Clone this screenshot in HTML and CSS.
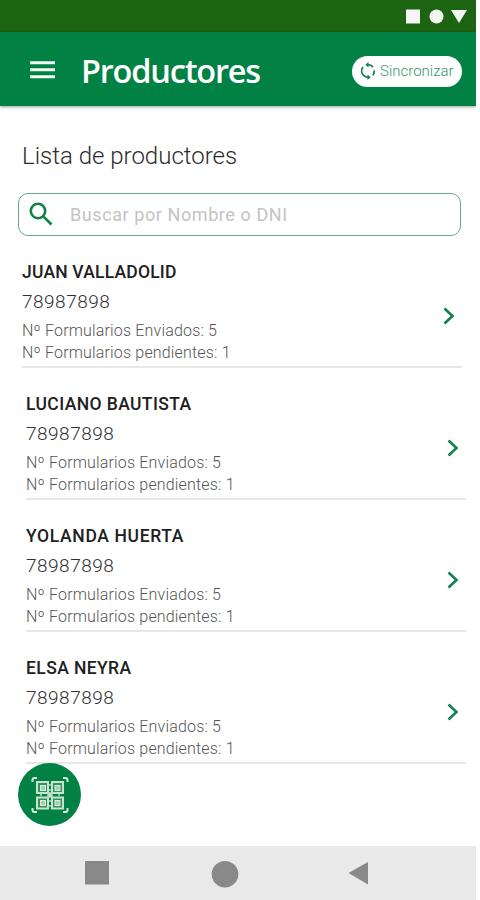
FILE: index.html
```
<!DOCTYPE html>
<html lang="es">
<head>
<meta charset="utf-8">
<title>Productores</title>
<link rel="stylesheet" href="styles.css">
</head>
<body>
<div class="app">
  <div class="status">
    <svg width="62" height="16" viewBox="0 0 62 16"><path d="M1 1.500h14v14H1z"/><circle cx="31.500" cy="8.500" r="7"/><path d="M46 2h16l-8 13z"/></svg>
  </div>
  <header class="bar">
    <svg class="menu" width="25" height="18" viewBox="0 0 25 18"><path d="M0 1.700h25M0 8.700h25M0 15.800h25"/></svg>
    <h1 class="title">Productores</h1>
    <button class="sync">
      <svg width="18" height="18" viewBox="0 0 18 18"><path class="arc" d="M4.600 13.400A6.300 6.300 0 0 1 4 5.100M9 2.700a6.300 6.300 0 0 1 5 2.500M15.200 8.300a6.300 6.300 0 0 1-1.400 5M9 15.300a6.300 6.300 0 0 1-4.400-1.900"/><path d="M9.500 0v5.600L6.300 2.800zM8.500 12.400v5.600l3.200-2.800z"/></svg>
      <span>Sincronizar</span>
    </button>
  </header>
  <main class="content">
    <h2 class="heading">Lista de productores</h2>
    <div class="search">
      <svg width="24" height="24" viewBox="0 0 24 24"><circle cx="9" cy="9" r="7.200"/><path d="M14.300 14.300l8.200 8.200"/></svg>
      <span>Buscar por Nombre o DNI</span>
    </div>
    <ul class="list">
      <li class="item first"><div><div class="name n1">JUAN VALLADOLID</div><div class="dni">78987898</div><div class="sent">Nº Formularios Enviados: 5</div><div class="pending">Nº Formularios pendientes: 1</div></div><svg class="chev" width="14" height="20" viewBox="0 0 14 20"><path d="M2.500 2.500L10.500 10l-8 7.500"/></svg></li>
      <li class="item"><div><div class="name n2">LUCIANO BAUTISTA</div><div class="dni">78987898</div><div class="sent">Nº Formularios Enviados: 5</div><div class="pending">Nº Formularios pendientes: 1</div></div><svg class="chev" width="14" height="20" viewBox="0 0 14 20"><path d="M2.500 2.500L10.500 10l-8 7.500"/></svg></li>
      <li class="item"><div><div class="name n3">YOLANDA HUERTA</div><div class="dni">78987898</div><div class="sent">Nº Formularios Enviados: 5</div><div class="pending">Nº Formularios pendientes: 1</div></div><svg class="chev" width="14" height="20" viewBox="0 0 14 20"><path d="M2.500 2.500L10.500 10l-8 7.500"/></svg></li>
      <li class="item"><div><div class="name n4">ELSA NEYRA</div><div class="dni">78987898</div><div class="sent">Nº Formularios Enviados: 5</div><div class="pending">Nº Formularios pendientes: 1</div></div><svg class="chev" width="14" height="20" viewBox="0 0 14 20"><path d="M2.500 2.500L10.500 10l-8 7.500"/></svg></li>
    </ul>
    <button class="fab" aria-label="QR">
      <svg width="38" height="38" viewBox="0 0 38 38">
        <path class="corner" d="M1.500 6V4q0-2 2-2H6M32 2h2.500q2 0 2 2v2M36.500 32v2q0 2-2 2H32M6 36H3.500q-2 0-2-2v-2"/>
        <g class="cell"><rect x="6" y="6" width="11" height="11"/><rect x="21" y="6" width="11" height="11"/><rect x="6" y="21.500" width="11" height="11"/><rect x="21" y="21.500" width="11" height="11"/></g>
        <g class="core"><rect x="9.500" y="9.500" width="5" height="5"/><rect x="24" y="9.500" width="5" height="5"/><rect x="9.500" y="24.500" width="5" height="5"/><rect x="24" y="24.500" width="5" height="5"/></g>
        <path class="dots" d="M17 17h4v4h-4zM18 9h2M18 14h2M18 25h2M18 30h2M9 19h2M27 19h2"/>
      </svg>
    </button>
  </main>
  <nav class="nav">
    <svg width="476" height="54" viewBox="0 0 476 54"><path d="M85 15h24v23.500H85z"/><circle cx="225" cy="28.200" r="13.300"/><path d="M368 16v22.500L348.500 27z"/></svg>
  </nav>
</div>
</body>
</html>
```

FILE: styles.css
```
* { box-sizing: border-box; }
body { margin: 0; background: #fff; font-family: Roboto, "Liberation Sans", sans-serif; }
h1, h2, ul { margin: 0; padding: 0; }
svg { display: block; flex: none; }
button { border: 0; padding: 0; font: inherit; }
.app { width: 476px; height: 900px; display: flex; flex-direction: column; overflow: hidden; }
.status { height: 32px; background: #1c6412; display: flex; justify-content: flex-end; padding: 8px 9px 0 0; fill: #f5f5f3; flex: none; }
.bar { height: 74px; flex: none; background: #028145; display: flex; align-items: center; padding: 0 14px 0 30px; box-shadow: 0 1px 3px #0006; white-space: nowrap; }
.menu { stroke: #f4faf4; stroke-width: 3; margin-top: 1px; }
.title { margin-left: 26px; color: #fff; font-family: "Open Sans", "Noto Sans", sans-serif; font-size: 32.500px; font-weight: 600; line-height: 44px; letter-spacing: -1.2px; margin-top: 3px; width: 190px; }
.sync { margin-left: auto; margin-top: 4px; width: 110px; height: 31px; border-radius: 16px; background: #fff; color: #37966f; display: flex; align-items: center; padding-left: 7px; gap: 3px; font-size: 15px; font-weight: 300; }
.sync svg { fill: #16804e; }
.arc { fill: none; stroke: #16804e; stroke-width: 1.8; }
.content { flex: 1; min-height: 0; padding: 34px 0 0 18px; display: flex; flex-direction: column; }
.heading { margin-left: 4px; font-size: 24px; line-height: 32px; font-weight: 300; color: #2c2c2c; }
.search { margin-top: 21px; width: 443px; height: 43px; flex: none; border: 1.5px solid #66aa89; border-radius: 10px; display: flex; align-items: center; padding-left: 10px; color: #c3c3c3; font-size: 18px; letter-spacing: .58px; white-space: nowrap; }
.search svg { fill: none; stroke: #128244; stroke-width: 2.6; margin-top: -2px; }
.search span { margin-left: 17px; }
.list { list-style: none; }
.item { width: 440px; height: 132px; margin-left: 8px; padding-top: 24px; border-bottom: 2px solid #e7e7e7; display: flex; justify-content: space-between; white-space: nowrap; }
.first { margin-left: 4px; }
.name { font-size: 17.5px; line-height: 24px; font-weight: 500; color: #202020; }
.n1 { letter-spacing: .2px; }
.n2 { letter-spacing: .4px; }
.n3 { letter-spacing: .65px; }
.n4 { letter-spacing: .4px; }
.dni { margin-top: 6px; font-size: 19px; line-height: 24px; font-weight: 300; letter-spacing: .5px; color: #303030; }
.sent, .pending { font-size: 16px; line-height: 22px; font-weight: 300; letter-spacing: .17px; color: #555; }
.sent { margin-top: 6px; }
.chev { fill: none; stroke: #128050; stroke-width: 2.6; margin: 46px 6px 0 0; }
.fab { width: 63px; height: 63px; flex: none; border-radius: 50%; background: #028145; display: grid; place-items: center; margin-top: -1px; }
.corner { fill: none; stroke: #d6eddc; stroke-width: 2; }
.cell { fill: #368f60; stroke: #c5e5ce; stroke-width: 2; }
.core { fill: #a5d2b3; stroke: #d7eedd; stroke-width: 1; }
.dots { fill: #c5e5ce; stroke: #b6dcc2; stroke-width: 1.5; }
.nav { height: 54.500px; flex: none; background: #e9e9e9; fill: #8a8989; }
```
